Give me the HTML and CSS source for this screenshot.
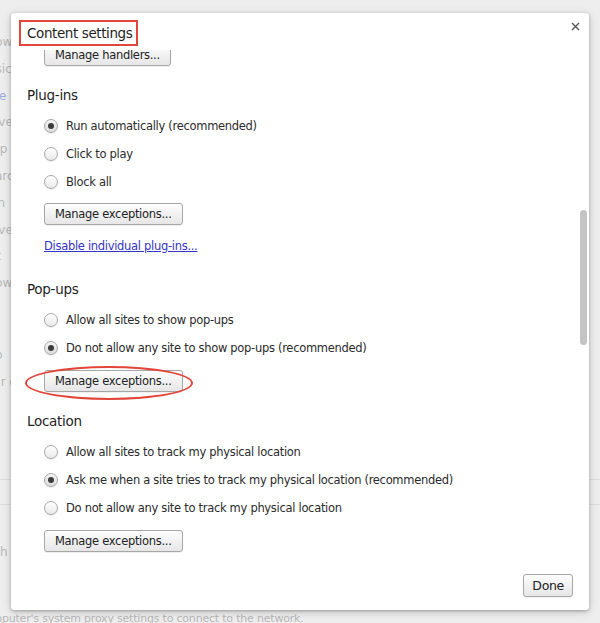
FILE: index.html
```html
<!DOCTYPE html>
<html lang="en">
<head>
  <meta charset="UTF-8">
  <title>Content settings</title>
  <link rel="stylesheet" href="styles.css">
</head>
<body>
  <div class="pagina">
    <div class="fundo">
      <p class="linha">Show</p>
      <p class="linha">Basic</p>
      <p class="linha azul">Use</p>
      <p class="linha">Solve</p>
      <p class="linha">Help</p>
      <p class="linha">Search</p>
      <p class="linha">Icon</p>
      <p class="linha">Solve</p>
      <p class="linha">List</p>
      <p class="linha">Show</p>
      <p class="linha info">Info</p>
      <p class="linha">Your c</p>
      <p class="linha">You</p>
      <hr class="um">
      <hr class="dois">
      <p class="linha high">High</p>
      <p class="rodape">Google Chrome is using your computer's system proxy settings to connect to the network.</p>
    </div>

    <div class="dialogo">
      <header>
        <h1>Content settings</h1>
        <button class="fechar" aria-label="Close">
          <svg width="9" height="9" viewBox="0 0 9 9"><path d="M1 1 L8 8 M8 1 L1 8" stroke="#555" stroke-width="1.4" fill="none"/></svg>
        </button>
      </header>

      <div class="conteudo">
        <div class="rolagem">
          <div class="secao primeira">
            <button class="botao">Manage handlers...</button>
          </div>

          <section class="secao">
            <h3>Plug-ins</h3>
            <label class="opcao"><span class="radio marcado"></span>Run automatically (recommended)</label>
            <label class="opcao"><span class="radio"></span>Click to play</label>
            <label class="opcao"><span class="radio"></span>Block all</label>
            <button class="botao">Manage exceptions...</button>
            <a class="link" href="#">Disable individual plug-ins...</a>
          </section>

          <section class="secao">
            <h3>Pop-ups</h3>
            <label class="opcao"><span class="radio"></span>Allow all sites to show pop-ups</label>
            <label class="opcao"><span class="radio marcado"></span>Do not allow any site to show pop-ups (recommended)</label>
            <div class="destaque">
              <button class="botao">Manage exceptions...</button>
              <span class="elipse"></span>
            </div>
          </section>

          <section class="secao">
            <h3>Location</h3>
            <label class="opcao"><span class="radio"></span>Allow all sites to track my physical location</label>
            <label class="opcao"><span class="radio marcado"></span>Ask me when a site tries to track my physical location (recommended)</label>
            <label class="opcao"><span class="radio"></span>Do not allow any site to track my physical location</label>
            <button class="botao ultimo">Manage exceptions...</button>
          </section>
        </div>
        <div class="barra"></div>
      </div>

      <footer>
        <button class="botao">Done</button>
      </footer>
    </div>
  </div>
</body>
</html>
```

FILE: styles.css
```css
:root {
  --fundo: #eeeeee;
  --texto: #2b2b2b;
  --texto-fundo: #b8b8b8;
  --vermelho: #e2463a;
  --link: #3434c8;
}

* {
  box-sizing: border-box;
  margin: 0;
  padding: 0;
}

body {
  margin: 0;
  background-color: var(--fundo);
  font-family: 'DejaVu Sans', sans-serif;
  color: var(--texto);
}

.pagina {
  position: relative;
  width: 600px;
  height: 623px;
  overflow: hidden;
}

/* pagina de configuracoes por tras do dialogo */
.fundo {
  padding-top: 34px;
  font-size: 12px;
  color: var(--texto-fundo);
  .linha {
    height: 26.8px;
    line-height: 16px;
    margin-left: -20px;
    white-space: nowrap;
  }
  .azul {
    color: #a2acdc;
    margin-left: -16px;
  }
  .info {
    margin-top: 45px;
  }
  hr {
    border: none;
    border-top: 1px solid #dddddd;
  }
  hr.um {
    margin-top: 52px;
  }
  hr.dois {
    margin-top: 24px;
  }
  .high {
    margin-top: 39px;
  }
  .rodape {
    margin: 40px 0 0 -178px;
    font-size: 11px;
    line-height: 16px;
    white-space: nowrap;
    letter-spacing: -0.2px;
  }
}

.dialogo {
  position: absolute;
  left: 11px;
  top: 13px;
  width: 578px;
  height: 597px;
  background-color: #fff;
  border-radius: 3px;
  box-shadow: 0 1px 3px rgba(0, 0, 0, 0.25), 0 2px 10px rgba(0, 0, 0, 0.18);
  display: flex;
  flex-direction: column;

  header {
    display: flex;
    justify-content: space-between;
    align-items: flex-start;
    height: 37px;
    padding: 7px 9px 0 8px;
  }
  h1 {
    font-size: 13.5px;
    font-weight: normal;
    letter-spacing: -0.4px;
    line-height: 20px;
    padding: 1px 4px 1px 6px;
    border: 2px solid var(--vermelho);
    color: #1e1e1e;
  }
  .fechar {
    border: none;
    background: none;
    padding: 0;
    margin-top: 2px;
    width: 9px;
    height: 9px;
    display: flex;
  }
}

.conteudo {
  position: relative;
  flex: 1;
  overflow: hidden;
  .rolagem {
    padding-left: 16px;
  }
  .barra {
    position: absolute;
    right: 2px;
    top: 160px;
    width: 7px;
    height: 135px;
    border-radius: 4px;
    background-color: #c4c4c4;
  }
}

.secao {
  display: flex;
  flex-direction: column;
  align-items: flex-start;
  margin-top: 19px;
  h3 {
    font-size: 13.5px;
    font-weight: normal;
    letter-spacing: -0.3px;
    line-height: 20px;
    margin-bottom: 7px;
    color: #1e1e1e;
  }
  > .botao, .destaque {
    margin: 7px 0 0 17px;
  }
  .destaque, > .ultimo {
    margin-top: 8px;
  }
  &.primeira {
    margin-top: -6px;
    > .botao {
      margin-top: 0;
    }
  }
}

.opcao {
  display: flex;
  align-items: center;
  gap: 8px;
  height: 28px;
  padding-left: 17px;
  font-size: 11.5px;
  letter-spacing: -0.3px;
  white-space: nowrap;
}

.radio {
  position: relative;
  width: 14px;
  height: 14px;
  border-radius: 50%;
  border: 1px solid #a9a9a9;
  background: linear-gradient(#ffffff, #e9e9e9);
  box-shadow: 0 1px 1px rgba(0, 0, 0, 0.08);
  &.marcado {
    background: linear-gradient(#f4f4f4, #dcdcdc);
    &::after {
      content: '';
      position: absolute;
      left: 3px;
      top: 3px;
      width: 6px;
      height: 6px;
      border-radius: 50%;
      background-color: #3c3c3c;
    }
  }
}

.botao {
  font-family: 'DejaVu Sans', sans-serif;
  font-size: 11.5px;
  letter-spacing: -0.3px;
  color: #222;
  height: 22px;
  padding: 0 10px;
  border: 1px solid #a6a6a6;
  border-radius: 3px;
  background: linear-gradient(#fdfdfd, #e6e6e6);
  box-shadow: 0 1px 0 rgba(0, 0, 0, 0.06);
}

.link {
  margin: 11px 0 4px 17px;
  font-size: 11.5px;
  letter-spacing: -0.3px;
  line-height: 20px;
  color: var(--link);
}

.destaque {
  position: relative;
  .elipse {
    position: absolute;
    left: -19px;
    top: -4px;
    width: 168px;
    height: 34px;
    border: 2px solid var(--vermelho);
    border-radius: 50%;
  }
}

footer {
  display: flex;
  justify-content: flex-end;
  padding: 0 16px 13px 0;
  .botao {
    padding: 0 8px;
    height: 23px;
    font-size: 12.5px;
  }
}
```
